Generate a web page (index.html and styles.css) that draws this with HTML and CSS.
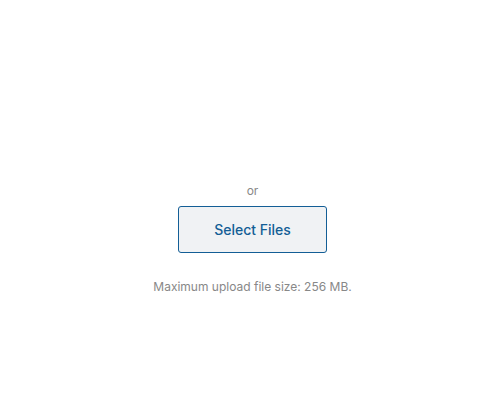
FILE: index.html
```html
<!DOCTYPE html>
<html lang="en">
<head>
  <meta charset="UTF-8">
  <meta name="viewport" content="width=device-width, initial-scale=1.0">
  <title>Upload</title>
  <link rel="stylesheet" href="styles.css">
</head>
<body>
  <div class="uploader">
    <p class="drop-or">or</p>
    <button class="select-btn">Select Files</button>
    <p class="max-size">Maximum upload file size: 256 MB.</p>
  </div>
</body>
</html>
```

FILE: styles.css
```css
body {
  margin: 0;
  background: #fff;
  font-family: Inter, "Liberation Sans", Arial, sans-serif;
  color: #1e1e1e;
}

.uploader {
  display: flex;
  flex-direction: column;
  align-items: center;
  padding: 183px 0 0 14px;
}

.drop-or {
  margin: 0;
  font-size: 12px;
  line-height: 16px;
  color: #888;
}

.select-btn {
  margin-top: 7px;
  width: 149px;
  height: 47px;
  border: 1px solid #135e96;
  border-radius: 3px;
  background: #f0f2f4;
  color: #135e96;
  font-family: inherit;
  font-size: 14px;
  font-weight: 500;
  cursor: pointer;
}

.max-size {
  margin: 26px 0 0;
  font-size: 12px;
  line-height: 16px;
  color: #888;
}
```
